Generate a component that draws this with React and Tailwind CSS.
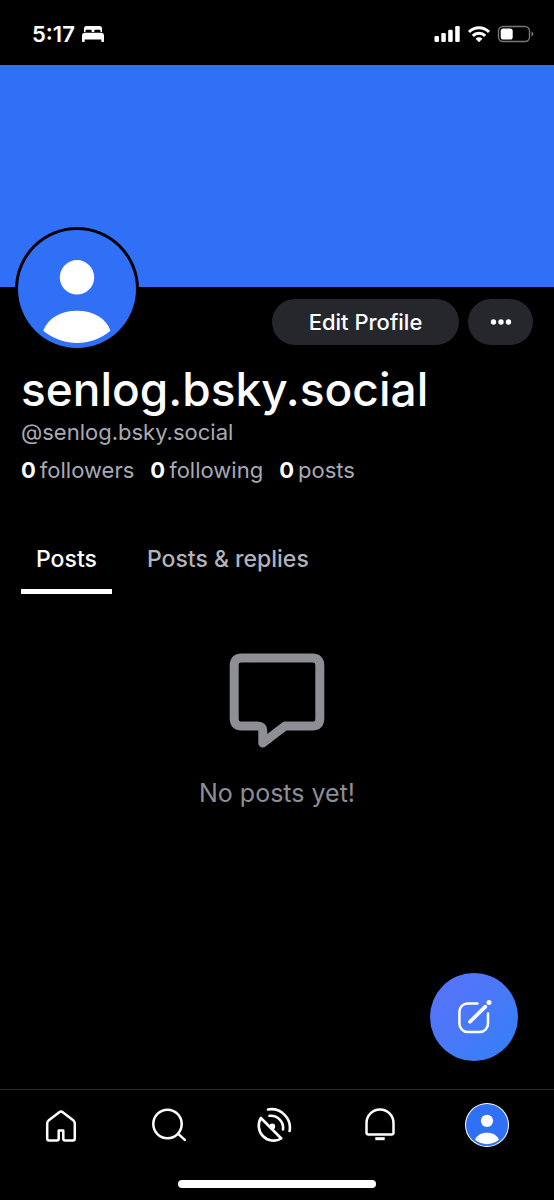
const stats = [
  { count: 0, label: 'followers' },
  { count: 0, label: 'following' },
  { count: 0, label: 'posts' },
]

function BedIcon() {
  return (
    <svg viewBox="0 0 24 18" className="h-[18px] w-6" fill="currentColor" aria-hidden="true">
      <path d="M3 7V3.500A2.500 2.500 0 0 1 5.500 1h13A2.500 2.500 0 0 1 21 3.500V7h-1.500V5.800c0-.7-.4-1.100-1.100-1.100h-4c-.7 0-1.100.4-1.100 1.100V7h-2.600V5.800c0-.7-.4-1.100-1.100-1.100h-4c-.7 0-1.100.4-1.100 1.100V7z" />
      <path d="M3.500 7.700h17A2.600 2.600 0 0 1 23 10.300v5.900c0 .5-.3.800-.8.800h-1.100c-.5 0-.8-.3-.8-.8V14.500H3.700v1.700c0 .5-.3.800-.8.800H1.800c-.5 0-.8-.3-.8-.8v-5.900a2.600 2.600 0 0 1 2.500-2.600z" />
    </svg>
  )
}

function StatusBar() {
  return (
    <div className="flex h-[65px] items-center justify-between pl-8 pr-5 pt-[3px]">
      <div className="flex items-center gap-1.5">
        <span className="text-[22px] font-semibold leading-6">5:17</span>
        <BedIcon />
      </div>
      <div className="flex items-center gap-1.5">
        <svg viewBox="0 0 27 18" className="h-[18px] w-[27px]" fill="currentColor" aria-hidden="true">
          <rect x="0.500" y="11" width="4.500" height="6" rx="1.200" />
          <rect x="7.300" y="8" width="4.500" height="9" rx="1.200" />
          <rect x="14.200" y="4.700" width="4.500" height="12.300" rx="1.200" />
          <rect x="21.200" y="1" width="4.500" height="16" rx="1.200" />
        </svg>
        <svg viewBox="0 0 24 18" className="h-[18px] w-6" fill="none" stroke="currentColor" strokeWidth="3.100" aria-hidden="true">
          <path d="M2 7a14 14 0 0 1 20 0" />
          <path d="M5.800 10.900a8.700 8.700 0 0 1 12.400 0" />
          <path d="M12 17.200l-3.400-3.500a4.800 4.800 0 0 1 6.800 0z" fill="currentColor" stroke="none" />
        </svg>
        <svg viewBox="0 0 37 18" className="h-[18px] w-[37px]" fill="none" aria-hidden="true">
          <rect x="1.500" y="1.500" width="31" height="15" rx="4.500" stroke="#77777b" strokeWidth="1.400" />
          <rect x="3.700" y="3.500" width="12" height="11" rx="2.600" fill="currentColor" />
          <path d="M34.500 6.500c1.300.5 1.800 1.400 1.800 2.500s-.5 2-1.800 2.500z" fill="#77777b" />
        </svg>
      </div>
    </div>
  )
}

function Avatar({ className }) {
  return (
    <svg viewBox="0 0 118 118" className={className} aria-hidden="true">
      <circle cx="59" cy="59" r="59" fill="#2f70f7" />
      <circle cx="59" cy="47.300" r="17.200" fill="#fff" />
      <path d="M25.200 100.700C30 88 43 80.700 59 80.700s29 7.300 33.500 20C82 109 71 113 59 113s-23-4-33.800-12.300z" fill="#fff" />
    </svg>
  )
}

function HomeIcon() {
  return (
    <svg viewBox="0 0 36 36" className="size-9" fill="none" stroke="currentColor" strokeWidth="2.500" strokeLinejoin="round" aria-hidden="true">
      <path d="M16.600 5Q18 4 19.400 5L30.200 13.200Q31.800 14.500 31.800 16.500V31.500Q31.800 33.500 29.800 33.500H22.300Q20.300 33.500 20.300 31.500V23.500H15.700V31.500Q15.700 33.500 13.700 33.500H6.200Q4.200 33.500 4.200 31.500V16.500Q4.200 14.500 5.800 13.200Z" />
    </svg>
  )
}

function SearchIcon() {
  return (
    <svg viewBox="0 0 36 36" className="size-9" fill="none" stroke="currentColor" strokeWidth="2.500" strokeLinecap="round" aria-hidden="true">
      <circle cx="17.500" cy="17" r="14.200" />
      <path d="M28.200 26.800l6.600 6" />
    </svg>
  )
}

function FeedsIcon() {
  return (
    <svg viewBox="0 0 36 36" className="size-9" fill="none" stroke="currentColor" strokeWidth="2.600" strokeLinecap="round" strokeLinejoin="round" aria-hidden="true">
      <path d="M4.900 11A14.900 14.900 0 0 0 25.300 31.500Z" />
      <circle cx="16.300" cy="19.400" r="2.900" fill="currentColor" stroke="none" />
      <path d="M13.500 8.800A12.300 12.300 0 0 1 27 22.500" />
      <path d="M12 2.500A18.600 18.600 0 0 1 33.600 24" />
    </svg>
  )
}

function BellIcon() {
  return (
    <svg viewBox="0 0 36 36" className="size-9" fill="none" stroke="currentColor" strokeWidth="2.500" strokeLinejoin="round" aria-hidden="true">
      <path d="M4.500 16a13.500 13.500 0 0 1 27 0V25.500q0 2-2 2h-23q-2 0-2-2z" />
      <path d="M13.300 31.700h9.400" strokeWidth="3" />
    </svg>
  )
}

function ComposeIcon() {
  return (
    <svg viewBox="0 0 36 36" className="size-9" fill="none" stroke="currentColor" strokeWidth="2.500" strokeLinecap="round" aria-hidden="true">
      <path d="M21.500 4.500H11.700a8.300 8.300 0 0 0-8.300 8.300v12a8.300 8.300 0 0 0 8.300 8.300h12a8.300 8.300 0 0 0 8.300-8.300V14.500" />
      <path d="M14 22.700L29.300 7.600" strokeWidth="3.700" />
      <circle cx="33" cy="3.600" r="2.500" fill="currentColor" stroke="none" />
    </svg>
  )
}

function EmptyPosts() {
  return (
    <div className="mt-[59px] flex flex-col items-center text-[#8d8e96]">
      <svg viewBox="0 0 96 96" className="size-24" fill="none" stroke="currentColor" strokeWidth="9" strokeLinejoin="round" aria-hidden="true">
        <path d="M12.500 5h71Q90.800 5 90.800 12.500v53Q90.800 73 83.500 73H56L33.800 90V78Q33.800 73 28.800 73H12.500Q5.200 73 5.200 65.500v-53Q5.200 5 12.500 5z" />
      </svg>
      <p className="mt-7 text-[25px] leading-8">No posts yet!</p>
    </div>
  )
}

function BottomNav() {
  return (
    <nav className="border-t border-[#2a2a2c] pb-3">
      <div className="grid h-[70px] grid-cols-5 items-center justify-items-center pl-2 pr-3.5">
        <a href="#home" aria-label="Home"><HomeIcon /></a>
        <a href="#search" aria-label="Search"><SearchIcon /></a>
        <a href="#feeds" aria-label="Feeds"><FeedsIcon /></a>
        <a href="#notifications" aria-label="Notifications"><BellIcon /></a>
        <a href="#profile" aria-label="Profile" className="rounded-full bg-white p-px">
          <Avatar className="size-[42px]" />
        </a>
      </div>
      {/* home indicator */}
      <div className="mx-auto mt-5 h-2 w-[198px] rounded-full bg-white"></div>
    </nav>
  )
}

export default function App() {
  return (
    <div className="flex min-h-screen flex-col bg-black font-['Inter',sans-serif] text-white">
      <StatusBar />

      <main className="relative flex flex-1 flex-col">
        <div className="h-[222px] bg-[#2f70f7]"></div>

        {/* avatar overlaps the banner */}
        <div className="absolute left-[15px] top-[162px] rounded-full bg-black p-[3px]">
          <Avatar className="size-[118px]" />
        </div>

        <div className="px-[21px]">
          <div className="mt-3 flex justify-end gap-[9px]">
            <button type="button" className="h-[46px] w-[187px] rounded-full bg-[#26272d] text-[22px] font-medium">
              Edit Profile
            </button>
            <button type="button" aria-label="More options" className="flex h-[46px] w-[65px] items-center justify-center rounded-full bg-[#26272d]">
              <svg viewBox="0 0 22 6" className="h-1.5 w-[22px]" fill="currentColor" aria-hidden="true">
                <circle cx="3.500" cy="3" r="2.700" />
                <circle cx="11" cy="3" r="2.700" />
                <circle cx="18.500" cy="3" r="2.700" />
              </svg>
            </button>
          </div>

          <h1 className="mt-4 text-[46px] font-medium leading-[56px]">senlog.bsky.social</h1>
          <p className="text-[22px] leading-[30px] text-[#a9aab4]">@senlog.bsky.social</p>

          <div className="mt-2 flex gap-4 text-[22px] leading-[30px]">
            {stats.map(s => (
              <span key={s.label} className="flex gap-1">
                <b className="font-bold">{s.count}</b>
                <span className="text-[#a9aab4]">{s.label}</span>
              </span>
            ))}
          </div>

          <div role="tablist" className="mt-[58px] flex gap-5 text-[23px] font-medium leading-8">
            <button type="button" role="tab" aria-selected="true" className="border-b-[5px] border-white px-[15px] pb-[14px]">
              Posts
            </button>
            <button type="button" role="tab" aria-selected="false" className="border-b-[5px] border-transparent px-[15px] pb-[14px] text-[#b2b3bd]">
              Posts &amp; replies
            </button>
          </div>
        </div>

        <EmptyPosts />

        <button
          type="button"
          aria-label="New post"
          className="absolute bottom-7 right-9 flex size-[88px] items-center justify-center rounded-full bg-gradient-to-br from-[#5a71fa] to-[#2f80f6]"
        >
          <ComposeIcon />
        </button>
      </main>

      <BottomNav />
    </div>
  )
}
